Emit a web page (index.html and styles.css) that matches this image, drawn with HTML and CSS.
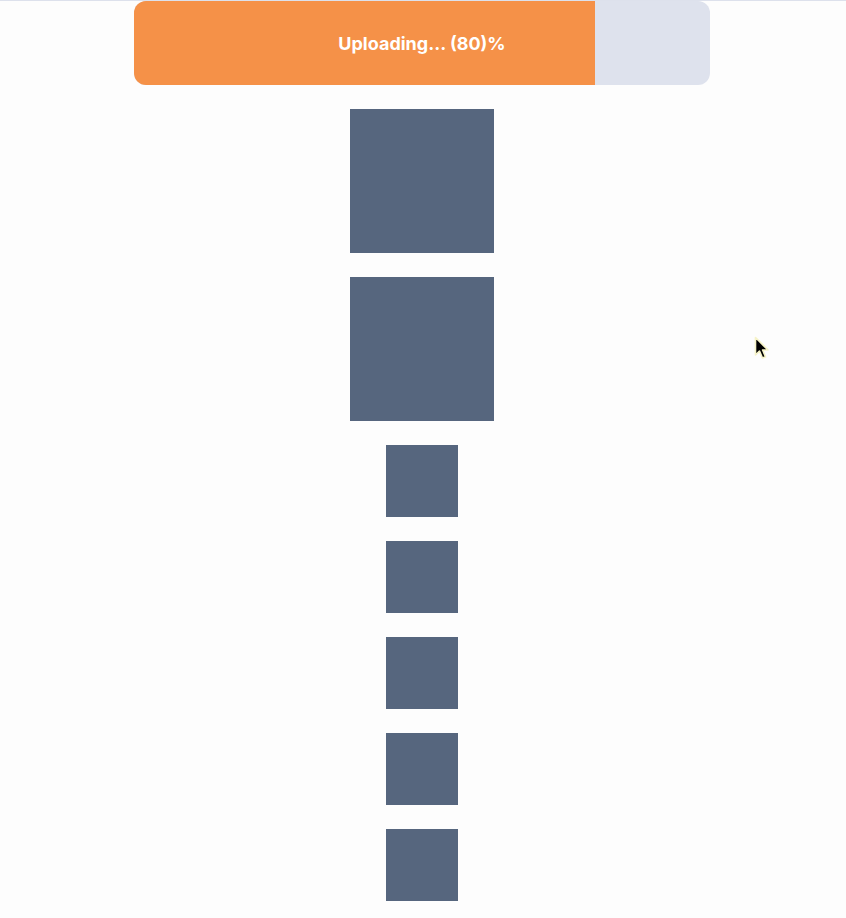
FILE: index.html
```html
<!DOCTYPE html>
<html>
<head>
<meta charset="utf-8">
<link rel="stylesheet" href="styles.css">
</head>
<body>
<div class="topline"></div>
<main class="page">
  <div class="progress">
    <div class="fill" style="width: 80%"></div>
    <span class="label">Uploading... (80)%</span>
  </div>
  <div class="stack">
    <div class="box big"></div>
    <div class="box big"></div>
    <div class="box small"></div>
    <div class="box small"></div>
    <div class="box small"></div>
    <div class="box small"></div>
    <div class="box small"></div>
  </div>
</main>
<svg class="cursor" width="18" height="26" viewBox="0 0 18 26">
  <path d="M1.5 1.5 L1.5 19 L5.5 15 L8.5 22 L11.5 20.8 L8.6 14 L14 14 Z" fill="#000" stroke="#f6f3c8" stroke-width="1.6" stroke-linejoin="round"/>
</svg>
</body>
</html>
```
FILE: styles.css
```css
html, body {
  margin: 0;
  padding: 0;
  background: #fdfdfd;
  font-family: Inter, "Noto Sans", sans-serif;
}
.topline {
  height: 1px;
  background: #dde1ec;
}
.page {
  display: flex;
  flex-direction: column;
  align-items: center;
  gap: 24px;
  padding-right: 2px;
}
.progress {
  position: relative;
  width: 576px;
  height: 84px;
  background: #dee2ed;
  border-radius: 12px;
  overflow: hidden;
  display: flex;
  align-items: center;
  justify-content: center;
}
.fill {
  position: absolute;
  left: 0;
  top: 0;
  bottom: 0;
  background: #f59148;
}
.label {
  position: relative;
  color: #fff;
  font-weight: 700;
  font-size: 18px;
  letter-spacing: 0;
}
.stack {
  display: flex;
  flex-direction: column;
  align-items: center;
  gap: 24px;
}
.box {
  background: #56667e;
}
.big {
  width: 144px;
  height: 144px;
}
.small {
  width: 72px;
  height: 72px;
}
.cursor {
  position: absolute;
  left: 754px;
  top: 336px;
}
```
